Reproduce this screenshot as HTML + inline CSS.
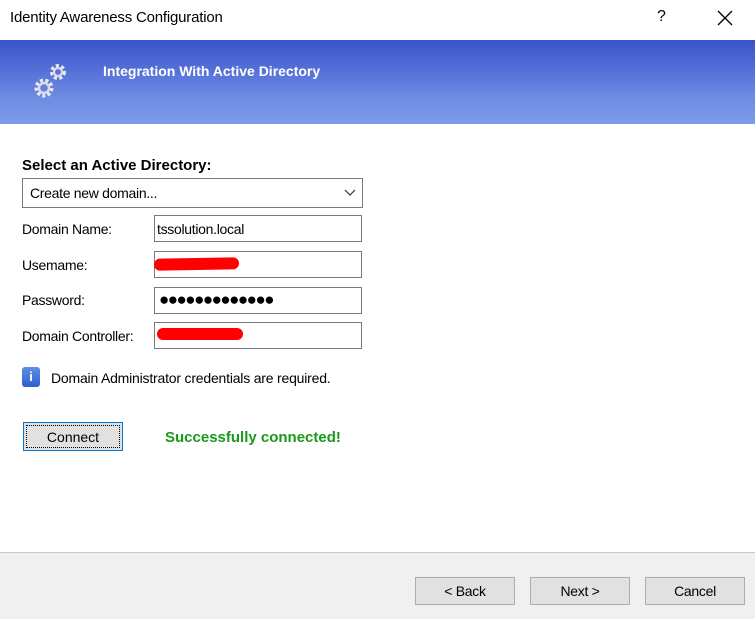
<!DOCTYPE html>
<html><head><style>
body{margin:0;width:755px;height:618px;position:relative;background:#fff;font-family:"Liberation Sans",sans-serif;font-size:14px;color:#000;overflow:hidden}
.a{position:absolute}
.inp{position:absolute;left:154px;width:206px;height:25px;border:1px solid #7a7a7a;background:#fff}
.lbl{position:absolute;left:22px;font-size:14px;letter-spacing:-0.3px}
.btn{position:absolute;top:577px;width:98px;height:26px;border:1px solid #adadad;background:#e1e1e1;text-align:center;line-height:26px;font-size:14px;letter-spacing:-0.3px}
.red{position:absolute;height:12px;background:#f00;border-radius:6px}
</style></head><body>
<div class="a" style="left:10px;top:9px;font-size:15px;letter-spacing:-0.2px">Identity Awareness Configuration</div>
<div class="a" style="left:657px;top:8px;font-size:16px">?</div>
<svg class="a" style="left:717px;top:10px" width="16" height="16"><path d="M1 1L15 15M15 1L1 15" stroke="#000" stroke-width="1.3"/></svg>
<div class="a" style="left:0;top:40px;width:755px;height:84px;background:linear-gradient(#3a53c9,#6e8de3 70%,#7c9ceb)"></div>
<svg class="a" style="left:28px;top:58px" width="48" height="60" viewBox="0 0 48 60">
<g fill="none" stroke="#e8e8ee" stroke-width="4" stroke-dasharray="3 2.2"><circle cx="30" cy="14" r="6"/><circle cx="16" cy="30" r="7.5"/></g>
<circle cx="30" cy="14" r="4" fill="none" stroke="#dcdce6" stroke-width="2.2"/>
<circle cx="16" cy="30" r="5" fill="none" stroke="#dcdce6" stroke-width="2.4"/>
</svg>
<div class="a" style="left:103px;top:63px;color:#fff;font-weight:bold;font-size:14px">Integration With Active Directory</div>
<div class="a" style="left:22px;top:157px;font-weight:bold;font-size:15px">Select an Active Directory:</div>
<div class="a" style="left:22px;top:178px;width:339px;height:28px;border:1px solid #7a7a7a;background:#fff"><span style="position:absolute;left:7px;top:6px;letter-spacing:-0.3px">Create new domain...</span><svg style="position:absolute;right:6px;top:10px" width="12" height="8"><path d="M1 1L6 6L11 1" stroke="#333" fill="none" stroke-width="1.2"/></svg></div>
<div class="lbl" style="top:221px">Domain Name:</div>
<div class="lbl" style="top:257px">Usemame:</div>
<div class="lbl" style="top:292px">Password:</div>
<div class="lbl" style="top:328px">Domain Controller:</div>
<div class="inp" style="top:215px"><span style="position:absolute;left:2px;top:5px;letter-spacing:-0.3px">tssolution.local</span></div>
<div class="inp" style="top:251px"></div>
<div class="inp" style="top:287px"><span style="position:absolute;left:4px;top:2px;font-size:17px;letter-spacing:-1.5px">●●●●●●●●●●●●●</span></div>
<div class="inp" style="top:322px"></div>
<div class="red" style="left:154px;top:258px;width:85px;transform:rotate(-1deg)"></div>
<div class="red" style="left:157px;top:328px;width:86px"></div>
<div class="a" style="left:22px;top:367px;width:18px;height:20px;background:linear-gradient(#5f8fe8,#2c5fd0);border-radius:3px;color:#fff;font-weight:bold;font-size:13px;text-align:center;line-height:20px">i</div>
<div class="a" style="left:51px;top:370px;letter-spacing:-0.2px">Domain Administrator credentials are required.</div>
<div class="a" style="left:23px;top:422px;width:98px;height:27px;border:1px solid #0078d7;background:#e1e1e1"><div style="position:absolute;left:2px;top:2px;right:2px;bottom:2px;border:1px dotted #000;text-align:center;line-height:22px">Connect</div></div>
<div class="a" style="left:165px;top:429px;color:#1a9a1a;font-weight:bold;font-size:15px">Successfully connected!</div>
<div class="a" style="left:0;top:552px;width:755px;height:66px;background:#f0f0f0;border-top:1px solid #c8c8c8"></div>
<div class="btn" style="left:415px">&lt; Back</div>
<div class="btn" style="left:530px">Next &gt;</div>
<div class="btn" style="left:645px">Cancel</div>
</body></html>
